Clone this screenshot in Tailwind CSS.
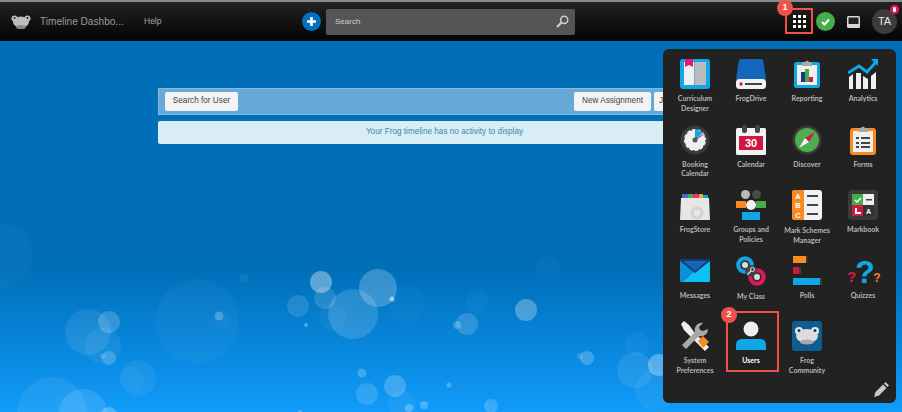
<!DOCTYPE html>
<html lang="en">
<head>
    <meta charset="UTF-8">
    <meta name="viewport" content="width=device-width, initial-scale=1.0">
    <title>Timeline Dashboard</title>
    <script src="https://cdn.jsdelivr.net/npm/@tailwindcss/browser@4"></script>
</head>
<body class="relative w-[902px] h-[412px] overflow-hidden bg-[#006fb8] font-['Liberation_Sans',Arial,sans-serif]">

    <!-- Page background with bubbles -->
    <div class="relative h-[412px] flex flex-col bg-linear-to-b from-[#006fb8] from-65% to-[#119bfa]">
        <svg class="absolute inset-0" width="902" height="412" fill="#fff">
            <circle cx="0" cy="256" r="33" opacity=".025"/><circle cx="321" cy="282" r="11" opacity=".36"/>
            <circle cx="325" cy="298" r="11" opacity=".13"/><circle cx="378" cy="288" r="19" opacity=".22"/>
            <circle cx="353" cy="314" r="25" opacity=".15"/><circle cx="333" cy="317" r="14" opacity=".04"/>
            <circle cx="407" cy="304" r="18" opacity=".025"/><circle cx="298" cy="306" r="11" opacity=".12"/>
            <circle cx="306" cy="325" r="2" opacity=".3"/><circle cx="392" cy="299" r="2.5" opacity=".5"/>
            <circle cx="457" cy="325" r="4" opacity=".22"/><circle cx="197" cy="321" r="42" opacity=".035"/>
            <circle cx="219" cy="316" r="4.5" opacity=".22"/><circle cx="223" cy="320" r="9" opacity=".03"/>
            <circle cx="244" cy="278" r="5" opacity=".05"/><circle cx="88" cy="332" r="23" opacity=".09"/>
            <circle cx="109" cy="322" r="11" opacity=".18"/><circle cx="103" cy="346" r="18" opacity=".06"/>
            <circle cx="109" cy="358" r="7" opacity=".18"/><circle cx="103" cy="356" r="3" opacity=".15"/>
            <circle cx="138" cy="378" r="18" opacity=".06"/><circle cx="132" cy="378" r="12" opacity=".03"/>
            <circle cx="52" cy="412" r="35" opacity=".07"/><circle cx="83" cy="413" r="24" opacity=".12"/>
            <circle cx="109" cy="415" r="8" opacity=".25"/><circle cx="362" cy="373" r="4.5" opacity=".22"/>
            <circle cx="367" cy="394" r="11" opacity=".14"/><circle cx="395" cy="386" r="11" opacity=".2"/>
            <circle cx="449" cy="385" r="2.5" opacity=".25"/><circle cx="424" cy="405" r="4" opacity=".25"/>
            <circle cx="409" cy="408" r="4" opacity=".25"/><circle cx="402" cy="405" r="14" opacity=".05"/>
            <circle cx="300" cy="412" r="2" opacity=".3"/><circle cx="548" cy="268" r="12" opacity=".02"/>
            <circle cx="477" cy="302" r="12" opacity=".03"/><circle cx="526" cy="310" r="11" opacity=".28"/>
            <circle cx="467" cy="324" r="11" opacity=".16"/><circle cx="587" cy="358" r="7" opacity=".22"/>
            <circle cx="580" cy="356" r="3" opacity=".15"/><circle cx="637" cy="344" r="12" opacity=".04"/>
            <circle cx="635" cy="370" r="18" opacity=".09"/><circle cx="659" cy="365" r="11" opacity=".3"/>
            <circle cx="655" cy="390" r="20" opacity=".05"/><circle cx="491" cy="406" r="7" opacity=".18"/>
        </svg>

        <!-- Top navigation -->
        <header class="relative h-[41px] shrink-0 flex items-center border-t-2 border-[#8a8a8a] bg-linear-to-b from-[#232323] to-[#050505]">
            <svg class="ml-[11px] w-[20px] h-[14px]" viewBox="0 0 20 14" fill="#bdbdbd">
                <circle cx="3.5" cy="3.5" r="3"/><circle cx="16.5" cy="3.5" r="3"/>
                <ellipse cx="10" cy="7" rx="8" ry="5.5"/><ellipse cx="10" cy="12" rx="5" ry="2" fill="#888"/>
                <circle cx="3.5" cy="3" r="1" fill="#222"/><circle cx="16.5" cy="3" r="1" fill="#222"/>
            </svg>
            <span class="ml-[9px] w-[84px] whitespace-nowrap text-[10.1px] text-[#9a9a9a]">Timeline Dashbo...</span>
            <span class="ml-[20px] w-[17px] text-[8.5px] text-[#a5a5a5]">Help</span>
            <div class="ml-[141px] w-[19px] h-[19px] rounded-full bg-[#0071bc] flex items-center justify-center">
                <svg width="9" height="9" viewBox="0 0 9 9" fill="#fff"><path d="M3.2 0h2.6v3.2H9v2.6H5.8V9H3.2V5.800H0V3.200h3.200z"/></svg>
            </div>
            <div class="ml-[5px] w-[249px] h-[26px] rounded-[2px] bg-[#555] flex items-center justify-between pl-[9px] pr-[6px]">
                <span class="text-[8px] text-[#cfcfcf]">Search</span>
                <svg width="13" height="13" viewBox="0 0 13 13" fill="none" stroke="#cfcfcf" stroke-width="1.500"><circle cx="8.200" cy="4.800" r="3.600"/><path d="M5.500 7.500 1 12" stroke-width="2.200"/></svg>
            </div>
            <div class="ml-[210px] w-[28px] flex justify-center">
                <div class="grid grid-cols-3 gap-[2px]">
                    <i class="w-[3px] h-[3px] bg-white"></i><i class="w-[3px] h-[3px] bg-white"></i><i class="w-[3px] h-[3px] bg-white"></i>
                    <i class="w-[3px] h-[3px] bg-white"></i><i class="w-[3px] h-[3px] bg-white"></i><i class="w-[3px] h-[3px] bg-white"></i>
                    <i class="w-[3px] h-[3px] bg-white"></i><i class="w-[3px] h-[3px] bg-white"></i><i class="w-[3px] h-[3px] bg-white"></i>
                </div>
            </div>
            <div class="ml-[3px] w-[19px] h-[19px] rounded-full bg-[#46ad4a] flex items-center justify-center">
                <svg width="9" height="8" viewBox="0 0 9 8" fill="none" stroke="#fff" stroke-width="2"><path d="m1 4 2.500 2.500L8 1.500"/></svg>
            </div>
            <svg class="ml-[12px]" width="13" height="12" viewBox="0 0 13 12">
                <rect width="13" height="12" rx="1.500" fill="#d8d8d8"/><rect x="1.500" y="1.500" width="10" height="6.500" fill="#222"/>
            </svg>
            <div class="relative ml-[12px] w-[25px] h-[25px] rounded-full bg-[#3c3c3c] flex items-center justify-center text-[11px] text-[#e6e6e6]">
                TA
                <span class="absolute -top-[4px] -right-[2px] w-[9px] h-[9px] rounded-full bg-[#e2185f] flex items-center justify-center">
                    <i class="w-[3px] h-[5px] rounded-full bg-white"></i>
                </span>
            </div>
        </header>

        <!-- Timeline content -->
        <main class="relative ml-[158px] mt-[47px] w-[573px] flex flex-col gap-[6px]">
            <div class="h-[27px] bg-[#66a8d7] border border-[#85bbe0] flex items-center justify-between pl-[6px] pr-[3px]">
                <button class="h-[19px] w-[73px] rounded-[2px] bg-[#f3f3f3] text-[8.2px] text-[#444]">Search for User</button>
                <div class="flex gap-[3px]">
                    <button class="h-[19px] w-[77px] rounded-[2px] bg-[#f3f3f3] text-[8.2px] text-[#444]">New Assignment</button>
                    <button class="h-[19px] w-[73px] rounded-[2px] bg-[#f3f3f3] text-[8.2px] text-[#444] text-left pl-[5px]">Join</button>
                </div>
            </div>
            <div class="h-[23px] rounded-[2px] bg-[#d9edf7] flex items-center justify-center text-[8.2px] text-[#3a87ad]">Your Frog timeline has no activity to display</div>
        </main>
    </div>

    <!-- App launcher menu -->
    <section class="absolute left-[663px] top-[49px] w-[233px] h-[354px] rounded-[6px] bg-[#222] pt-[10px] pl-[4px]">
        <div class="grid grid-cols-[repeat(4,56px)] auto-rows-[65.500px] text-center text-[7px] leading-[9.500px] font-bold font-['Lato',sans-serif] text-[#b5b5b5]">

            <div class="flex flex-col items-center">
                <svg width="30" height="30" viewBox="0 0 30 30"><rect width="30" height="30" rx="3" fill="#0fa8e4"/><rect x="4" y="3" width="10" height="23" fill="#efefef"/><rect x="14.500" y="3" width="11.500" height="23" fill="#bcbcbc"/><path d="M5 0h8v8l-4-2-4 2z" fill="#ea1577"/></svg>
                <span class="mt-[5px]">Curriculum<br>Designer</span>
            </div>
            <div class="flex flex-col items-center">
                <svg width="30" height="30" viewBox="0 0 30 30"><path d="M5 0h20q2 0 2.500 3L30 21H0L2.500 3Q3 0 5 0z" fill="#1466bd"/><rect y="20" width="30" height="10" rx="3.500" fill="#f2f2f2"/><circle cx="5" cy="25" r="1.700" fill="#d8174f"/><rect x="9" y="24" width="17" height="2" fill="#444"/></svg>
                <span class="mt-[5px]">FrogDrive</span>
            </div>
            <div class="flex flex-col items-center">
                <svg width="30" height="30" viewBox="0 0 30 30"><rect x="2" y="3" width="26" height="26" rx="2.500" fill="#0fa8e4"/><rect x="5" y="6" width="20" height="20" fill="#efefef"/><path d="M10 7V3h3q2-3 4 0h3v4z" fill="#a9a9a9"/><rect x="9" y="13" width="4" height="10" fill="#20367f"/><rect x="13" y="10" width="4" height="13" fill="#3fae49"/><rect x="17" y="18" width="4" height="5" fill="#d8174f"/></svg>
                <span class="mt-[5px]">Reporting</span>
            </div>
            <div class="flex flex-col items-center">
                <svg width="30" height="30" viewBox="0 0 30 30"><path d="M1 30V18l4-3v15zM8 30V14h5v16zM15 30V17l5 3v10zM23 30V17l5-4v17z" fill="#f0f0f0"/><path d="m0 14 11-7 8 6L28 3" fill="none" stroke="#0fa8e4" stroke-width="3"/><path d="M23 0h7v7z" fill="#0fa8e4"/></svg>
                <span class="mt-[5px]">Analytics</span>
            </div>

            <div class="flex flex-col items-center">
                <svg width="30" height="30" viewBox="0 0 30 30"><circle cx="15" cy="15" r="14.500" fill="#3a3a3a"/><circle cx="15" cy="15" r="11" fill="#efefef"/><circle cx="15" cy="15" r="11" fill="none" stroke="#3a3a3a" stroke-width="1.500" stroke-dasharray="2 3.800"/><path d="M15 15V4.500a11 11 0 0 1 8 3.500z" fill="#0fa8e4"/><path d="m15 15 8.500-5.500" stroke="#d8174f"/><circle cx="15" cy="15" r="2.500" fill="#555"/></svg>
                <span class="mt-[5px]">Booking<br>Calendar</span>
            </div>
            <div class="flex flex-col items-center">
                <svg width="30" height="30" viewBox="0 0 30 30"><rect y="3" width="30" height="27" rx="1.500" fill="#f2f2f2"/><rect x="3" y="11" width="24" height="14" fill="#d0173f"/><rect x="6" y="0" width="5" height="8" rx="2" fill="#444"/><rect x="19" y="0" width="5" height="8" rx="2" fill="#444"/><text x="15" y="22" text-anchor="middle" font-size="11" font-weight="700" fill="#fff" font-family="Liberation Sans">30</text></svg>
                <span class="mt-[5px]">Calendar</span>
            </div>
            <div class="flex flex-col items-center">
                <svg width="30" height="30" viewBox="0 0 30 30"><circle cx="15" cy="15" r="14.500" fill="#3a3a3a"/><circle cx="15" cy="15" r="12" fill="#4cae4c"/><path d="m23 7-6 10-4-4z" fill="#d8174f"/><path d="m7 23 6-10 4 4z" fill="#f2f2f2"/></svg>
                <span class="mt-[5px]">Discover</span>
            </div>
            <div class="flex flex-col items-center">
                <svg width="30" height="30" viewBox="0 0 30 30"><rect x="2" y="3" width="26" height="27" rx="3" fill="#f78b1f"/><rect x="5" y="6" width="20" height="21" fill="#efefef"/><path d="M10 7V3h3q2-3 4 0h3v4z" fill="#a9a9a9"/><path d="M8 12h3v2H8zM13 12h9v2h-9zM8 17h3v2H8zM13 17h9v2h-9zM8 21h3v2H8zM13 21h9v2h-9z" fill="#444"/></svg>
                <span class="mt-[5px]">Forms</span>
            </div>

            <div class="flex flex-col items-center">
                <svg width="30" height="30" viewBox="0 0 30 30"><rect x="2" y="4" width="6" height="5" fill="#3e70c8"/><rect x="8" y="4" width="5" height="5" fill="#46ad4a"/><path d="M13 9V5q3-3 6 0v4z" fill="#e6357a"/><rect x="19" y="4" width="4" height="5" fill="#f5a623"/><rect x="23" y="5" width="5" height="4" fill="#0fa8e4"/><path d="M1 8h28l1 22H0z" fill="#e6e6e6"/><circle cx="17" cy="23" r="5" fill="#e6e6e6" stroke="#d2d2d2" stroke-width="3"/></svg>
                <span class="mt-[5px]">FrogStore</span>
            </div>
            <div class="flex flex-col items-center">
                <svg width="30" height="30" viewBox="0 0 30 30"><circle cx="9.500" cy="4.500" r="4.500" fill="#b9b9b9"/><circle cx="20.500" cy="4.500" r="4.500" fill="#4a4a4a"/><rect x="0" y="11" width="10" height="7" fill="#f78b1f"/><rect x="20" y="11" width="10" height="7" fill="#46ad4a"/><circle cx="15" cy="15" r="5" fill="#f2f2f2"/><rect x="6" y="22" width="18" height="8" fill="#0fa8e4"/></svg>
                <span class="mt-[5px]">Groups and<br>Policies</span>
            </div>
            <div class="flex flex-col items-center">
                <svg width="30" height="30" viewBox="0 0 30 30"><rect width="30" height="30" rx="3" fill="#f2f2f2"/><path d="M3 0h9v30H3a3 3 0 0 1-3-3V3a3 3 0 0 1 3-3z" fill="#f78b1f"/><path d="M15 5h11v2H15zM15 14h11v2H15zM15 23h11v2H15z" fill="#444"/><g font-size="7.500" font-weight="700" fill="#fff" font-family="Liberation Sans" text-anchor="middle"><text x="6" y="8.500">A</text><text x="6" y="18">B</text><text x="6" y="27.500">C</text></g></svg>
                <span class="mt-[6px]">Mark Schemes<br>Manager</span>
            </div>
            <div class="flex flex-col items-center">
                <svg width="30" height="30" viewBox="0 0 30 30"><rect width="30" height="30" rx="4" fill="#3a3a3a"/><rect x="4" y="4" width="11" height="11" fill="#46ad4a"/><rect x="15" y="4" width="11" height="11" fill="#efefef"/><rect x="4" y="15" width="11" height="11" fill="#d0173f"/><rect x="15" y="15" width="11" height="11" fill="#333"/><path d="m7 10 2 2 4-4" fill="none" stroke="#fff" stroke-width="1.500"/><path d="M18 9h6v1.500h-6z" fill="#444"/><path d="M7 18h2v4h4v2H7z" fill="#fff"/><text x="20.500" y="24" text-anchor="middle" font-size="7" font-weight="700" fill="#fff" font-family="Liberation Sans">A</text></svg>
                <span class="mt-[5px]">Markbook</span>
            </div>

            <div class="flex flex-col items-center">
                <svg width="30" height="30" viewBox="0 0 30 30"><path d="M1 3h28l1 1v21l-1 1H1l-1-1V4z" fill="#0b8fd8"/><path d="M30 5v20l-1 1H3L15 15z" fill="#0fc0f5"/><path d="M0 4l1-1h28l1 1v1L15 17 0 5z" fill="#123b73"/><path d="M3 5h24L15 15z" fill="#1466bd"/></svg>
                <span class="mt-[5px]">Messages</span>
            </div>
            <div class="flex flex-col items-center">
                <svg width="30" height="30" viewBox="0 0 30 30"><circle cx="9" cy="9" r="6.800" fill="#333" stroke="#0fa8e4" stroke-width="4"/><circle cx="21" cy="21" r="6.800" fill="#333" stroke="#e2185f" stroke-width="4"/><circle cx="15" cy="15" r="6" fill="#444"/><circle cx="16.500" cy="13.500" r="2" fill="none" stroke="#e6e6e6"/><path d="m15 15-3.500 3.500" stroke="#e6e6e6" stroke-width="1.200"/><circle cx="9" cy="9" r="3" fill="#dcdcdc"/><circle cx="21" cy="21" r="3" fill="#dcdcdc"/></svg>
                <span class="mt-[6px]">My Class</span>
            </div>
            <div class="flex flex-col items-center">
                <svg width="30" height="30" viewBox="0 0 30 30"><rect x="1" y="0" width="13" height="7" fill="#f78b1f"/><rect x="14" y="0" width="1.500" height="7" fill="#3a3a3a"/><rect x="1" y="11" width="6" height="7" fill="#d0173f"/><rect x="7" y="11" width="2" height="7" fill="#3a3a3a"/><rect x="1" y="22" width="27" height="7" fill="#0fa8e4"/><rect x="28" y="22" width="2" height="7" fill="#3a3a3a"/></svg>
                <span class="mt-[5px]">Polls</span>
            </div>
            <div class="flex flex-col items-center">
                <svg class="overflow-visible" width="30" height="30" viewBox="0 0 30 30" font-weight="700" font-family="Liberation Sans" text-anchor="middle"><text x="17" y="27" font-size="32" fill="#0fa8e4">?</text><text x="3.500" y="26" font-size="15" fill="#d8174f">?</text><text x="29" y="26" font-size="12" fill="#f78b1f">?</text></svg>
                <span class="mt-[5px]">Quizzes</span>
            </div>

            <div class="flex flex-col items-center">
                <svg width="30" height="30" viewBox="0 0 30 30"><path d="m1 3 3-3 5 4 5 7 15 15-4 4L10 15 4 9z" fill="#efefef"/><path d="M28 8a7 7 0 0 1-9 7L6 28l-4-4L15 11a7 7 0 0 1 8-9l-4 4 1 3 3 1z" fill="#a9a9a9"/><path d="m18 20 5-5 6 6-6 6z" fill="#f78b1f"/></svg>
                <span class="mt-[5px]">System<br>Preferences</span>
            </div>
            <div class="flex flex-col items-center">
                <svg width="30" height="30" viewBox="0 0 30 30"><circle cx="15" cy="8" r="7.500" fill="#efefef"/><path d="M6 18h18q6 0 6 6v5H0v-5q0-6 6-6z" fill="#0fa8e4"/></svg>
                <span class="mt-[5px] text-white">Users</span>
            </div>
            <div class="flex flex-col items-center">
                <svg width="30" height="30" viewBox="0 0 30 30"><rect width="30" height="30" rx="3" fill="#0d5c92"/><circle cx="7" cy="10" r="4" fill="#e6e6e6"/><circle cx="23" cy="10" r="4" fill="#e6e6e6"/><ellipse cx="15" cy="15" rx="11" ry="7" fill="#dcdcdc"/><ellipse cx="15" cy="21" rx="7" ry="2.500" fill="#a9a9a9"/><circle cx="7" cy="9.500" r="1.500" fill="#123b73"/><circle cx="23" cy="9.500" r="1.500" fill="#123b73"/></svg>
                <span class="mt-[5px]">Frog<br>Community</span>
            </div>
        </div>

        <svg class="absolute right-[7px] bottom-[6px]" width="15" height="15" viewBox="0 0 15 15"><path d="m0 15 1.500-5L9 2.500l3.500 3.500L5 13.500z" fill="#c9c9c9"/><path d="m10 1.500 1.500-1.500L15 3.500 13.500 5z" fill="#c9c9c9"/></svg>
    </section>

    <!-- Numbered annotations -->
    <div class="absolute left-[785px] top-[8px] w-[28px] h-[26px] border-2 border-[#f0524a]"></div>
    <div class="absolute left-[777px] top-0 w-[16px] h-[16px] rounded-full bg-[#f0524a] flex items-center justify-center text-[9px] font-bold text-white">1</div>
    <div class="absolute left-[726px] top-[311px] w-[53px] h-[61px] border-2 border-[#f0524a]"></div>
    <div class="absolute left-[721px] top-[307px] w-[16px] h-[16px] rounded-full bg-[#f0524a] flex items-center justify-center text-[9px] font-bold text-white">2</div>

</body>
</html>
